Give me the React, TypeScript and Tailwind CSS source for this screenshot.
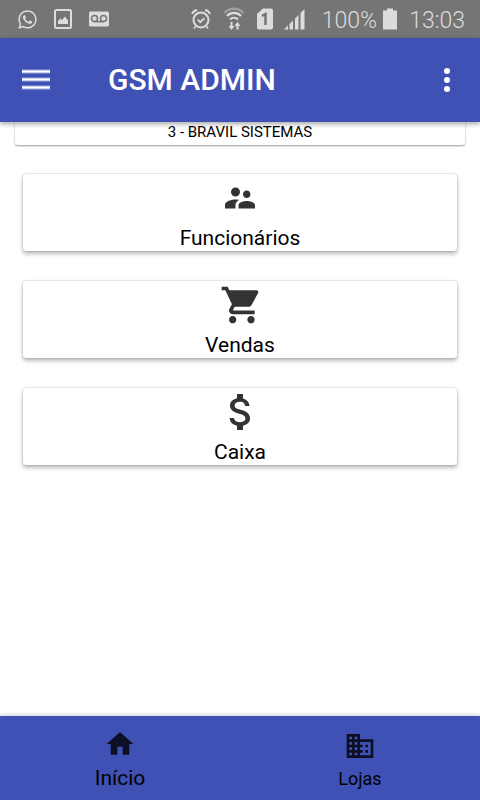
import type { ReactNode } from "react";
import { FaWhatsapp } from "react-icons/fa";

type IconProps = { d: string; className: string; viewBox?: string };

function Icon({ d, className, viewBox = "0 0 24 24" }: IconProps) {
  return (
    <svg viewBox={viewBox} fill="currentColor" aria-hidden="true" className={className}>
      <path d={d} />
    </svg>
  );
}

const PEOPLE =
  "M16.5 12c1.38 0 2.49-1.12 2.49-2.5S17.88 7 16.5 7 14 8.12 14 9.5s1.12 2.5 2.5 2.5zM9 11c1.66 0 2.99-1.34 2.99-3S10.66 5 9 5 6 6.34 6 8s1.34 3 3 3zm7.5 3c-1.83 0-5.5.92-5.5 2.75V19h11v-2.25c0-1.83-3.67-2.75-5.5-2.75zM9 13c-2.33 0-7 1.17-7 3.5V19h7v-2.25c0-.85.33-2.34 2.37-3.47C10.5 13.1 9.66 13 9 13z";
const CART =
  "M7 18c-1.1 0-1.99.9-1.99 2S5.9 22 7 22s2-.9 2-2-.9-2-2-2zM1 2v2h2l3.6 7.59-1.35 2.45c-.16.28-.25.61-.25.96 0 1.1.9 2 2 2h12v-2H7.42c-.14 0-.25-.11-.25-.25l.03-.12.9-1.63h7.45c.75 0 1.41-.41 1.75-1.03l3.58-6.49c.08-.14.12-.31.12-.48 0-.55-.45-1-1-1H5.21l-.94-2H1zm16 16c-1.1 0-1.99.9-1.99 2s.89 2 1.99 2 2-.9 2-2-.9-2-2-2z";
const MONEY =
  "M11.8 10.9c-2.27-.59-3-1.2-3-2.15 0-1.09 1.01-1.85 2.7-1.85 1.78 0 2.44.85 2.5 2.1h2.21c-.07-1.72-1.12-3.3-3.21-3.81V3h-3v2.16c-1.94.42-3.5 1.68-3.5 3.61 0 2.31 1.91 3.46 4.7 4.13 2.5.6 3 1.48 3 2.41 0 .69-.49 1.79-2.7 1.79-2.06 0-2.87-.92-2.98-2.1h-2.2c.12 2.19 1.76 3.42 3.68 3.83V21h3v-2.15c1.95-.37 3.5-1.5 3.5-3.55 0-2.84-2.43-3.81-4.7-4.4z";
const HOME = "M10 20v-6h4v6h5v-8h3L12 3 2 12h3v8z";
const BUSINESS =
  "M12 7V3H2v18h20V7H12zM6 19H4v-2h2v2zm0-4H4v-2h2v2zm0-4H4V9h2v2zm0-4H4V5h2v2zm4 12H8v-2h2v2zm0-4H8v-2h2v2zm0-4H8V9h2v2zm0-4H8V5h2v2zm10 12h-8v-2h2v-2h-2v-2h2v-2h-2V9h8v10zm-2-8h-2v2h2v-2zm0 4h-2v2h2v-2z";

function StatusBar() {
  return (
    <div className="flex h-[38px] shrink-0 items-center justify-between bg-[#757575] pr-[15px] pl-[17px] text-[#dcdcdc]">
      <div className="flex items-center gap-4">
        <FaWhatsapp className="size-[21px]" aria-hidden="true" />
        <svg viewBox="0 0 18 20" className="h-5 w-[18px]" aria-hidden="true">
          <rect x="1" y="1" width="16" height="18" rx="1.5" fill="none" stroke="currentColor" strokeWidth="2" />
          <path d="M4 15v-3l2.500-2.500L8 11l3-3.500 3 4V15z" fill="currentColor" />
        </svg>
        <svg viewBox="0 0 22 16" className="h-4 w-[22px]" aria-hidden="true">
          <rect x="1" y="0.5" width="20" height="15" rx="1.5" fill="currentColor" />
          <g fill="none" stroke="#757575" strokeWidth="1.5">
            <circle cx="6.5" cy="7.5" r="3" />
            <circle cx="15.5" cy="7.5" r="3" />
            <path d="M6.5 10.7h9" />
          </g>
        </svg>
      </div>
      <div className="flex items-center">
        <svg viewBox="0 0 20 22" className="mr-3 h-[22px] w-5" fill="none" stroke="currentColor" aria-hidden="true">
          <circle cx="10" cy="12" r="7.5" strokeWidth="2" />
          <path d="M6.7 11.7l2.5 2.5 4.3-4M4.5 18.5L3 20.5M15.5 18.5l1.5 2M1 6c.7-2 2.5-3.5 5-4M19 6c-.7-2-2.500-3.500-5-4" strokeWidth="1.8" />
        </svg>
        <svg viewBox="0 0 22 24" className="mr-3 h-6 w-[22px]" fill="none" stroke="currentColor" aria-hidden="true">
          <path d="M1.500 6a13 13 0 0 1 19 0" strokeWidth="2.500" opacity=".4" />
          <path d="M4 9a9.500 9.500 0 0 1 14 0" strokeWidth="2.200" />
          <path d="M7 12.500a5.500 5.500 0 0 1 8 0" strokeWidth="2.200" />
          <path d="M8.500 15v6M14.500 22.500v-6" strokeWidth="2" />
          <path d="M5.500 19h6l-3 4zM11.500 19h6l-3-4z" fill="currentColor" stroke="none" />
        </svg>
        <svg viewBox="0 0 16 22" className="mr-[11px] h-[22px] w-4" aria-hidden="true">
          <path d="M6 .5h8a2 2 0 0 1 2 2v17a2 2 0 0 1-2 2H2a2 2 0 0 1-2-2V6z" fill="currentColor" />
          <path d="M5 7.800l3.500-1.800V17" fill="none" stroke="#757575" strokeWidth="2.500" />
        </svg>
        <svg viewBox="0 0 21 22" className="mr-[17px] h-[22px] w-[21px]" fill="currentColor" aria-hidden="true">
          <path d="M0 21.500l4-4v4zM5.500 16l3.500-3.500v9H5.500zM11 10.500L14.500 7v14.500H11zM16.500 5L20.500 1v20.500h-4z" />
        </svg>
        <span className="pt-[3px] text-[23px] leading-7 font-light">100%</span>
        <svg viewBox="0 0 14 22" className="mr-3 ml-[6px] h-[22px] w-[14px]" fill="currentColor" aria-hidden="true">
          <path d="M4 .5h6v2h4v19H0v-19h4z" />
        </svg>
        <span className="pt-[3px] text-[23px] leading-7 font-light">13:03</span>
      </div>
    </div>
  );
}

function MenuCard({ label, children }: { label: string; children: ReactNode }) {
  return (
    <button
      type="button"
      className="flex h-[77px] flex-col items-center rounded-[3px] bg-white text-[21px] leading-6 text-black shadow-[0_3px_4px_rgba(0,0,0,0.26),0_0_2px_rgba(0,0,0,0.3)]"
    >
      <span className="flex h-[52px] items-center justify-center pb-1 text-[#333]">{children}</span>
      {label}
    </button>
  );
}

export default function App() {
  return (
    <div className="flex h-screen flex-col overflow-hidden bg-white font-[Roboto,sans-serif] text-black">
      <StatusBar />
      <header className="z-10 flex h-[84px] shrink-0 items-center bg-[#3f51b5] px-[22px] text-white shadow-[0_2px_5px_rgba(0,0,0,0.35)]">
        <button type="button" aria-label="Menu">
          <svg viewBox="0 0 28 22" className="h-[22px] w-7" stroke="currentColor" aria-hidden="true">
            <path d="M0 2.500h28M0 10.500h28M0 18.500h28" strokeWidth="4" opacity=".5" />
            <path d="M0 2.500h28M0 10.500h28M0 18.500h28" strokeWidth="2" />
          </svg>
        </button>
        <h1 className="ml-[58px] flex-1 text-[30px] leading-9 font-medium">GSM ADMIN</h1>
        <button type="button" aria-label="Mais opções">
          <svg viewBox="0 0 22 24" className="h-6 w-[22px]" fill="currentColor" aria-hidden="true">
            <circle cx="11" cy="3" r="3" />
            <circle cx="11" cy="12" r="3" />
            <circle cx="11" cy="21" r="3" />
          </svg>
        </button>
      </header>
      <main className="flex min-h-0 flex-1 flex-col overflow-hidden">
        <div className="mx-[15px] rounded-b-[3px] bg-white pb-[3px] text-center text-[15px] leading-5 shadow-[0_1px_2px_rgba(0,0,0,0.4)]">
          3 - BRAVIL SISTEMAS
        </div>
        <div className="flex flex-col gap-[30px] px-[23px] pt-[29px]">
          <MenuCard label="Funcionários">
            <Icon d={PEOPLE} className="size-9" />
          </MenuCard>
          <MenuCard label="Vendas">
            <Icon d={CART} viewBox="-1 0 24 24" className="size-11" />
          </MenuCard>
          <MenuCard label="Caixa">
            <Icon d={MONEY} viewBox="-0.5 0 24 24" className="size-12" />
          </MenuCard>
        </div>
      </main>
      <nav className="grid h-[84px] shrink-0 grid-cols-2 bg-[#3f51b5] shadow-[0_-1px_4px_rgba(0,0,0,0.2)]">
        <button type="button" className="flex flex-col items-center gap-[6px] pt-3 text-[21px] leading-6">
          <Icon d={HOME} className="size-8 text-[#0d1024]" />
          Início
        </button>
        <button type="button" className="flex flex-col items-center gap-1 pt-[14px] text-lg leading-[26px]">
          <Icon d={BUSINESS} className="size-8 text-[#0d1024]" />
          Lojas
        </button>
      </nav>
    </div>
  );
}
